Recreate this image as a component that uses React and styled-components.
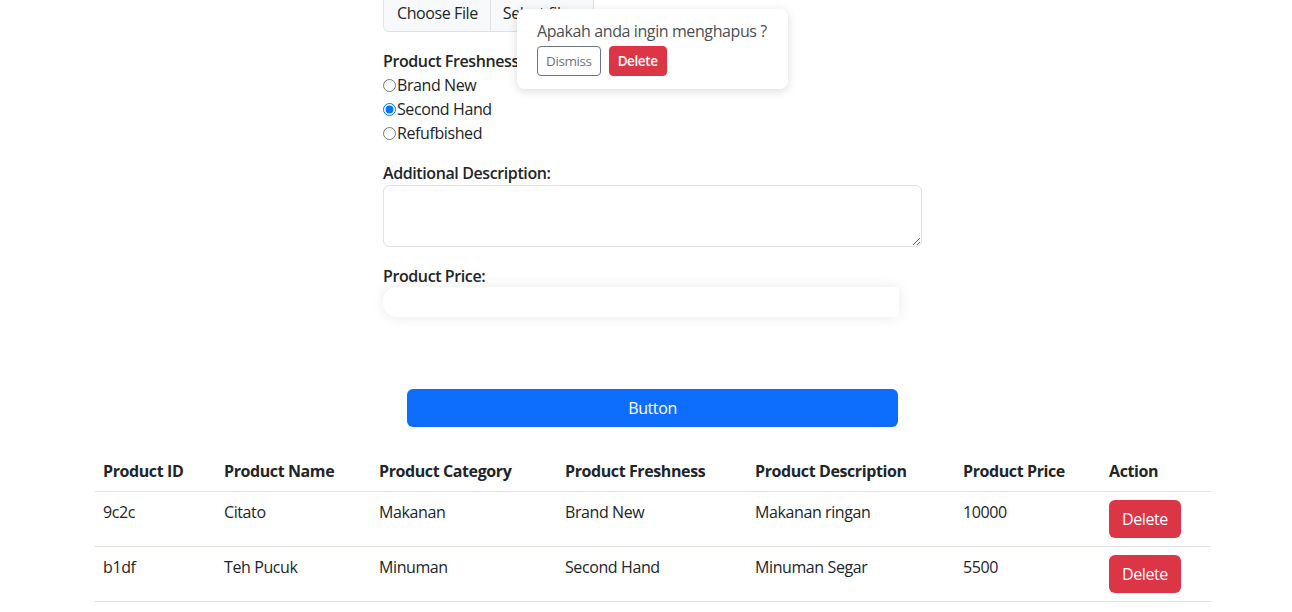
import React from "react";
import styled, { createGlobalStyle } from "styled-components";

const Global = createGlobalStyle`
  html, body { margin: 0; padding: 0; background: #fff; }
  body {
    font-family: "Open Sans", "Noto Sans", sans-serif;
    font-size: 16px;
    line-height: 24px;
    letter-spacing: -0.4px;
    color: #212529;
    overflow: hidden;
  }
  * { box-sizing: border-box; }
  button, input, textarea { letter-spacing: inherit; }
`;

const Page = styled.div`
  position: relative;
  width: 1292px;
  height: 612px;
  overflow: hidden;
`;

const Form = styled.form`
  width: 539px;
  margin-left: 383px;
  margin-top: -6px;
  display: flex;
  flex-direction: column;
`;

const FileBox = styled.div`
  display: flex;
  width: 211px;
  height: 38px;
  border: 1px solid #dee2e6;
  border-radius: 6px;
  background: #f8f9fa;
  overflow: hidden;
`;

const FileButton = styled.span`
  display: flex;
  align-items: center;
  padding: 0 12px 0 13px;
  border-right: 1px solid #dee2e6;
  color: #212529;
`;

const FileText = styled.span`
  display: flex;
  align-items: center;
  padding: 0 12px;
  white-space: nowrap;
`;

const Label = styled.label`
  display: block;
  font-weight: 600;
  margin-top: ${(p) => p.$gap || 0}px;
`;

const RadioRow = styled.label`
  display: flex;
  align-items: center;
  height: 24px;
`;

const Radio = styled.input`
  width: 13px;
  height: 13px;
  margin: 0 1px 0 0;
`;

const TextArea = styled.textarea`
  width: 539px;
  height: 62px;
  border: 1px solid #dee2e6;
  border-radius: 6px;
  font: inherit;
  padding: 6px 12px;
`;

const PriceInput = styled.input`
  width: 516px;
  height: 30px;
  margin-top: -1px;
  border: none;
  border-radius: 14px 0 0 14px;
  background: #fff;
  box-shadow: 0 0 14px rgba(0, 0, 0, 0.09);
  outline: none;
`;

const PrimaryButton = styled.button`
  width: 491px;
  height: 38px;
  margin: 72px 0 0 24px;
  background: #0d6efd;
  color: #fff;
  border: none;
  border-radius: 6px;
  font: inherit;
`;

const Table = styled.table`
  margin: 24px 0 0 95px;
  width: 1116px;
  border-collapse: collapse;
  table-layout: fixed;
`;

const Th = styled.th`
  text-align: left;
  font-weight: 700;
  padding: 8px;
  border-bottom: 1px solid #dee2e6;
  width: ${(p) => p.$w}px;
`;

const Td = styled.td`
  padding: 8px;
  vertical-align: top;
  border-bottom: 1px solid #dee2e6;
`;

const DangerButton = styled.button`
  height: 38px;
  width: 72px;
  padding: 0;
  background: #dc3545;
  color: #fff;
  border: none;
  border-radius: 6px;
  font: inherit;
`;

const Popover = styled.div`
  position: absolute;
  left: 517px;
  top: 9px;
  width: 271px;
  height: 80px;
  background: #fff;
  border-radius: 8px;
  box-shadow: 0 2px 10px rgba(0, 0, 0, 0.15);
  padding: 10px 20px 13px;
  color: #4a4f55;
`;

const PopText = styled.div`
  white-space: nowrap;
`;

const PopActions = styled.div`
  display: flex;
  gap: 8px;
  margin-top: 3px;
`;

const SmallButton = styled.button`
  height: 30px;
  padding: 0 8px;
  border-radius: 4px;
  font-family: inherit;
  font-size: 13.5px;
  border: 1px solid ${(p) => (p.$danger ? "#dc3545" : "#6c757d")};
  background: ${(p) => (p.$danger ? "#dc3545" : "#fff")};
  color: ${(p) => (p.$danger ? "#fff" : "#6c757d")};
  font-weight: ${(p) => (p.$danger ? 600 : 400)};
`;

const columns = [
  ["Product ID", 121],
  ["Product Name", 155],
  ["Product Category", 186],
  ["Product Freshness", 190],
  ["Product Description", 208],
  ["Product Price", 146],
  ["Action", 110],
];

const rows = [
  ["9c2c", "Citato", "Makanan", "Brand New", "Makanan ringan", "10000"],
  ["b1df", "Teh Pucuk", "Minuman", "Second Hand", "Minuman Segar", "5500"],
];

export default function App() {
  return (
    <Page>
      <Global />
      <Form onSubmit={(e) => e.preventDefault()}>
        <FileBox>
          <FileButton>Choose File</FileButton>
          <FileText>Select file</FileText>
        </FileBox>
        <Label $gap={17}>Product Freshness:</Label>
        <RadioRow>
          <Radio type="radio" name="fresh" />Brand New
        </RadioRow>
        <RadioRow>
          <Radio type="radio" name="fresh" defaultChecked />Second Hand
        </RadioRow>
        <RadioRow>
          <Radio type="radio" name="fresh" />Refufbished
        </RadioRow>
        <Label $gap={16}>Additional Description:</Label>
        <TextArea />
        <Label $gap={17}>Product Price:</Label>
        <PriceInput type="text" />
        <PrimaryButton type="button">Button</PrimaryButton>
      </Form>
      <Table>
        <thead>
          <tr>
            {columns.map(([c, w]) => (
              <Th key={c} $w={w}>{c}</Th>
            ))}
          </tr>
        </thead>
        <tbody>
          {rows.map((r) => (
            <tr key={r[0]}>
              {r.map((c, i) => (
                <Td key={i}>{c}</Td>
              ))}
              <Td>
                <DangerButton>Delete</DangerButton>
              </Td>
            </tr>
          ))}
        </tbody>
      </Table>
      <Popover>
        <PopText>Apakah anda ingin menghapus ?</PopText>
        <PopActions>
          <SmallButton>Dismiss</SmallButton>
          <SmallButton $danger>Delete</SmallButton>
        </PopActions>
      </Popover>
    </Page>
  );
}
